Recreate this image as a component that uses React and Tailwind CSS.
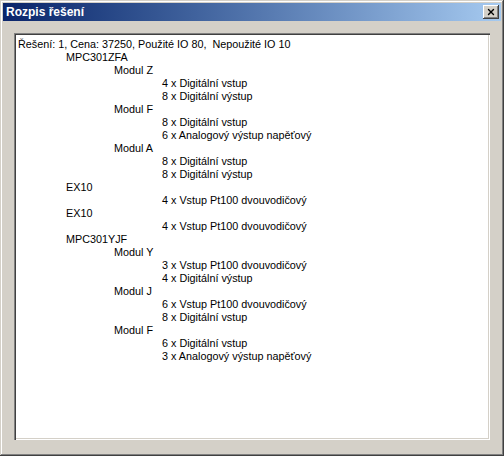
import { X } from 'lucide-react'

const lines = [
  [0, 'Řešení: 1, Cena: 37250, Použité IO 80,  Nepoužité IO 10'],
  [1, 'MPC301ZFA'],
  [2, 'Modul Z'],
  [3, '4 x Digitální vstup'],
  [3, '8 x Digitální výstup'],
  [2, 'Modul F'],
  [3, '8 x Digitální vstup'],
  [3, '6 x Analogový výstup napěťový'],
  [2, 'Modul A'],
  [3, '8 x Digitální vstup'],
  [3, '8 x Digitální výstup'],
  [1, 'EX10'],
  [3, '4 x Vstup Pt100 dvouvodičový'],
  [1, 'EX10'],
  [3, '4 x Vstup Pt100 dvouvodičový'],
  [1, 'MPC301YJF'],
  [2, 'Modul Y'],
  [3, '3 x Vstup Pt100 dvouvodičový'],
  [3, '4 x Digitální výstup'],
  [2, 'Modul J'],
  [3, '6 x Vstup Pt100 dvouvodičový'],
  [3, '8 x Digitální vstup'],
  [2, 'Modul F'],
  [3, '6 x Digitální vstup'],
  [3, '3 x Analogový výstup napěťový'],
]

const indent = ['pl-0', 'pl-12', 'pl-24', 'pl-36']

export default function App() {
  return (
    <div className="w-[504px] h-[456px] bg-[#d4d0c8] p-[3px] flex flex-col shadow-[inset_-1px_-1px_#404040,inset_1px_1px_#d4d0c8,inset_-2px_-2px_#808080,inset_2px_2px_#ffffff]">
      {/* title bar */}
      <div className="h-[18px] shrink-0 bg-linear-to-r from-[#0a246a] to-[#a6caf0] flex items-center justify-between pl-[3px] pr-[2px]">
        <span className="text-white font-bold text-[12px] leading-none font-['Liberation_Sans',Arial,sans-serif]">Rozpis řešení</span>
        <button className="w-4 h-[14px] bg-[#d4d0c8] flex items-center justify-center shadow-[inset_-1px_-1px_#404040,inset_1px_1px_#ffffff,inset_-2px_-2px_#808080]">
          <X size={10} strokeWidth={3.2} className="text-black" />
        </button>
      </div>

      <div className="flex-1 flex flex-col pt-[12px] pb-[13px] px-[11px]">
        <div className="flex-1 bg-white pl-[4px] pt-[5px] shadow-[inset_1px_1px_#808080,inset_2px_2px_#404040,inset_-1px_-1px_#ffffff,inset_-2px_-2px_#d4d0c8] font-['Liberation_Sans',Arial,sans-serif] text-[10.8px] leading-[13px] text-black">
          {lines.map(([lvl, text], i) => (
            <div key={i} className={`whitespace-pre ${indent[lvl]}`}>{text}</div>
          ))}
        </div>
      </div>
    </div>
  )
}
